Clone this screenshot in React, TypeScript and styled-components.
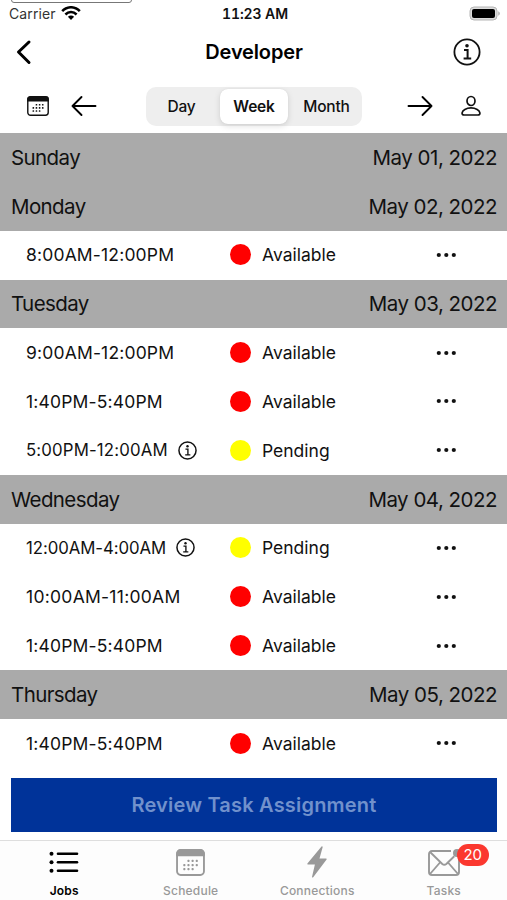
import React from "react";
import styled, { createGlobalStyle, css } from "styled-components";

const GlobalStyle = createGlobalStyle`
  *, *::before, *::after { box-sizing: border-box; }
  body { margin: 0; background: #fff; font-family: Inter, "Liberation Sans", sans-serif; color: #111; }
  button { font: inherit; color: inherit; border: 0; padding: 0; margin: 0; background: none; }
  svg { display: block; flex: none; }
`;

const Screen = styled.div`
  width: 507px;
  height: 900px;
  display: flex;
  flex-direction: column;
  overflow: hidden;
  background: #fff;
`;

const StatusBar = styled.header`
  height: 29px;
  flex: none;
  display: grid;
  grid-template-columns: 1fr auto 1fr;
  position: relative;
  align-items: center;
  padding: 0 6px 2px 9px;
`;

const DeviceEdge = styled.div`
  position: absolute;
  left: 11px;
  top: -8px;
  width: 121px;
  height: 11px;
  border: 1px solid #777;
  border-radius: 3px;
`;

const Carrier = styled.div`
  display: flex;
  align-items: center;
  gap: 5px;
  font-size: 14px;
  letter-spacing: 0.1px;
  color: #333;
`;

const Clock = styled.div`
  font-size: 14px;
  font-weight: 600;
  font-variant-numeric: tabular-nums;
  letter-spacing: -0.1px;
`;

const BatterySlot = styled.div`
  justify-self: end;
`;

const TitleBar = styled.div`
  height: 46px;
  flex: none;
  display: grid;
  grid-template-columns: 60px 1fr 60px;
  align-items: center;
  padding: 0 26px 0 14px;
`;

const Title = styled.h1`
  margin: 0;
  text-align: center;
  font-size: 20px;
  font-weight: 600;
  letter-spacing: -0.15px;
  padding-left: 13px;
  color: #000;
`;

const IconButton = styled.button<{ $end?: boolean }>`
  display: flex;
  align-items: center;
  justify-self: ${(p) => (p.$end ? "end" : "start")};
`;

const Toolbar = styled.div`
  height: 58px;
  flex: none;
  display: flex;
  align-items: center;
  padding: 4px 27px 0;
`;

const ToolGroup = styled.div<{ $gap: number }>`
  display: flex;
  align-items: center;
  gap: ${(p) => p.$gap}px;
`;

const Segmented = styled.div`
  display: flex;
  width: 216px;
  height: 39px;
  margin: 0 45px 0 49px;
  padding: 2px;
  border-radius: 10px;
  background: #eee;
`;

const Segment = styled.button<{ $selected?: boolean; $width: number; $inset?: string }>`
  width: ${(p) => p.$width}px;
  height: 35px;
  padding: ${(p) => p.$inset ?? "0"};
  border-radius: 8px;
  font-size: 15.5px;
  font-weight: 500;
  letter-spacing: -0.2px;
  ${(p) =>
    p.$selected &&
    css`
      background: #fff;
      font-weight: 600;
      letter-spacing: -0.2px;
      box-shadow: 0 2px 6px rgba(0, 0, 0, 0.13), 0 0 1px rgba(0, 0, 0, 0.1);
    `}
`;

const Agenda = styled.main`
  display: grid;
  flex: none;
  grid-auto-rows: 48.85px;
`;

const DayHeader = styled.div`
  display: flex;
  justify-content: space-between;
  align-items: center;
  padding: 0 10px 0.4px 11px;
  background: #aaa;
  font-size: 20.5px;
`;

const DayName = styled.span`
  letter-spacing: -0.6px;
`;

const DayDate = styled.span`
  letter-spacing: -0.5px;
`;

const SlotRow = styled.div`
  display: grid;
  grid-template-columns: 204px 32px 174px 1fr;
  align-items: center;
  padding: 0 0 0.4px 26px;
  font-size: 17.5px;
`;

const SlotTime = styled.div<{ $noted?: boolean; $tracking: number }>`
  display: flex;
  align-items: center;
  gap: 10px;
  font-size: ${(p) => (p.$noted ? 16.8 : 17.5)}px;
  letter-spacing: ${(p) => p.$tracking}px;
`;

const Dot = styled.span<{ $color: string }>`
  width: 21px;
  height: 21px;
  border-radius: 50%;
  background: ${(p) => p.$color};
`;

const SlotStatus = styled.span`
  letter-spacing: 0;
`;

const ReviewButton = styled.button`
  flex: none;
  height: 54px;
  margin: 10px 10px 0 11px;
  background: #003399;
  color: #7191cc;
  font-size: 20px;
  font-weight: 600;
  letter-spacing: 0.2px;
`;

const TabBar = styled.nav`
  flex: 1;
  margin-top: 8px;
  border-top: 1px solid #dedede;
  background: #fdfdfd;
  display: grid;
  grid-template-columns: repeat(4, 126.5px);
  padding-left: 1px;
`;

const Tab = styled.button<{ $active?: boolean }>`
  display: flex;
  flex-direction: column;
  align-items: center;
  color: ${(p) => (p.$active ? "#000" : "#999")};
`;

const TabIcon = styled.span`
  position: relative;
  height: 43px;
  display: flex;
  align-items: center;
`;

const TabLabel = styled.span<{ $active?: boolean }>`
  font-size: 12px;
  line-height: 14px;
  font-weight: ${(p) => (p.$active ? 600 : 500)};
  letter-spacing: 0.2px;
`;

const Badge = styled.span`
  position: absolute;
  left: 29px;
  top: 3px;
  width: 32px;
  height: 22px;
  border-radius: 11px;
  background: #fb382f;
  color: #fff;
  font-size: 15px;
  line-height: 22px;
  text-align: center;
`;

const WifiIcon = () => (
  <svg width="20" height="15" viewBox="0 0 20 15" fill="none" stroke="#000" strokeWidth="2.5">
    <path d="M1.2 5.2C6-.1 14-.1 18.8 5.2M4.4 8.5c3.2-3.2 8-3.2 11.2 0" />
    <path d="M6.9 10.7c1.7-1.7 4.5-1.7 6.2 0L10 14z" fill="#000" stroke="none" />
  </svg>
);

const BatteryIcon = () => (
  <svg width="32" height="16" viewBox="0 0 32 16">
    <rect x="1" y="1" width="27" height="13" rx="4" fill="#ddd" stroke="#b5b5b5" />
    <rect x="3" y="3" width="23" height="9" rx="2" />
    <path d="M29.3 5.3c2 .8 2 3.6 0 4.4z" fill="#aaa" />
  </svg>
);

const ChevronIcon = () => (
  <svg width="20" height="26" viewBox="0 0 20 26" fill="none" stroke="#000" strokeWidth="3" strokeLinecap="round" strokeLinejoin="round">
    <path d="M15 3L4.5 13 15 23.5" />
  </svg>
);

const InfoIcon = ({ size }: { size: number }) => (
  <svg width={size} height={size} viewBox="0 0 28 28" fill="none" stroke="#111" strokeWidth={size > 20 ? 1.8 : 2.2}>
    <circle cx="14" cy="14" r="12.6" />
    <path d="M11 12h3.6v8.3M10.6 20.5h7.6" strokeWidth="2" />
    <circle cx="14" cy="7.7" r="1.8" fill="#111" stroke="none" />
  </svg>
);

const gridDots = [
  [12, 11], [16, 11], [20, 11],
  [8, 15], [12, 15], [16, 15], [20, 15],
  [8, 19], [12, 19], [16, 19],
];

const CalendarIcon = ({ width, height }: { width: number; height: number }) => (
  <svg width={width} height={height} viewBox="0 0 28 26" preserveAspectRatio="none">
    <rect x="1" y="1" width="26" height="24" rx="3.5" fill="none" stroke="currentColor" strokeWidth="1.8" />
    <path d="M.2 7V4.5A4.2 4.2 0 014.4.2h19.2a4.2 4.2 0 014.2 4.3V7z" fill="currentColor" />
    {gridDots.map(([x, y]) => (
      <rect key={`${x}-${y}`} x={x - 1} y={y - 0.6} width="2.1" height="2.1" rx=".7" fill="currentColor" />
    ))}
  </svg>
);

const ArrowIcon = ({ right }: { right?: boolean }) => (
  <svg width="26" height="22" viewBox="0 0 26 22" fill="none" stroke="#000" strokeWidth="1.9" strokeLinecap="round" strokeLinejoin="round">
    <path d={right ? "M1.5 11h23M15.5 2l9 9-9 9" : "M24.5 11h-23M10.5 2l-9 9 9 9"} />
  </svg>
);

const PersonIcon = () => (
  <svg width="20" height="22" viewBox="0 0 20 22" fill="none" stroke="#111" strokeWidth="1.7">
    <ellipse cx="10" cy="6" rx="4" ry="4.5" />
    <path d="M3.2 20c-1.7 0-2.3-.9-2.1-2.1.4-2.6 4-5 8.9-5s8.5 2.4 8.9 5c.2 1.2-.4 2.1-2.1 2.1z" />
  </svg>
);

const MoreIcon = () => (
  <svg width="20" height="6" viewBox="0 0 20 6" fill="#111">
    <circle cx="2.8" cy="3" r="2.1" />
    <circle cx="10.3" cy="3" r="2.1" />
    <circle cx="17.8" cy="3" r="2.1" />
  </svg>
);

const ListIcon = () => (
  <svg width="30" height="22" viewBox="0 0 30 22">
    {[2, 10.5, 19].map((y) => (
      <g key={y}>
        <circle cx="2.5" cy={y + 0.8} r="2" />
        <path d={`M9 ${y + 0.8}h19`} stroke="#000" strokeWidth="2.6" strokeLinecap="round" />
      </g>
    ))}
  </svg>
);

const BoltIcon = () => (
  <svg width="20" height="32" viewBox="0 0 20 32" fill="#999">
    <path d="M14.5.5L.4 17.5q-.4 1 .5 1h7L5 31q.3 1 1.2.2L19.6 13.6q.4-1-.6-1h-6.5L15.7 1q-.3-1-1.2-.5z" />
  </svg>
);

const MailIcon = () => (
  <svg width="32" height="27" viewBox="0 0 32 27" fill="none" stroke="#999" strokeWidth="1.9">
    <path d="M23 2H4a3 3 0 00-3 3v18a3 3 0 003 3h24a3 3 0 003-3V9" />
    <path d="M2.3 3.3l12 11.7q2 1.7 4 0l8-7.7M2 25l10-11.5M30 25L20 13.5" />
    <circle cx="29" cy="4" r="4" fill="#999" stroke="none" />
  </svg>
);

type Slot = { time: string; status: "Available" | "Pending"; noted?: boolean; tracking?: number };
type Day = { name: string; date: string; slots: Slot[] };

const week: Day[] = [
  { name: "Sunday", date: "May 01, 2022", slots: [] },
  { name: "Monday", date: "May 02, 2022", slots: [{ time: "8:00AM-12:00PM", status: "Available" }] },
  {
    name: "Tuesday",
    date: "May 03, 2022",
    slots: [
      { time: "9:00AM-12:00PM", status: "Available" },
      { time: "1:40PM-5:40PM", status: "Available" },
      { time: "5:00PM-12:00AM", status: "Pending", noted: true, tracking: 0.15 },
    ],
  },
  {
    name: "Wednesday",
    date: "May 04, 2022",
    slots: [
      { time: "12:00AM-4:00AM", status: "Pending", noted: true, tracking: -0.08 },
      { time: "10:00AM-11:00AM", status: "Available", tracking: 0.27 },
      { time: "1:40PM-5:40PM", status: "Available" },
    ],
  },
  { name: "Thursday", date: "May 05, 2022", slots: [{ time: "1:40PM-5:40PM", status: "Available" }] },
];

export default function App() {
  return (
    <>
      <GlobalStyle />
      <Screen>
        <StatusBar>
          <DeviceEdge />
          <Carrier>
            Carrier
            <WifiIcon />
          </Carrier>
          <Clock>11:23 AM</Clock>
          <BatterySlot>
            <BatteryIcon />
          </BatterySlot>
        </StatusBar>
        <TitleBar>
          <IconButton aria-label="Back">
            <ChevronIcon />
          </IconButton>
          <Title>Developer</Title>
          <IconButton $end aria-label="Information">
            <InfoIcon size={28} />
          </IconButton>
        </TitleBar>
        <Toolbar>
          <ToolGroup $gap={22}>
            <CalendarIcon width={22} height={20} />
            <ArrowIcon />
          </ToolGroup>
          <Segmented>
            <Segment $width={72} $inset="0 5px 0 0">
              Day
            </Segment>
            <Segment $width={68} $selected>
              Week
            </Segment>
            <Segment $width={72} $inset="0 0 0 5px">
              Month
            </Segment>
          </Segmented>
          <ToolGroup $gap={28}>
            <ArrowIcon right />
            <PersonIcon />
          </ToolGroup>
        </Toolbar>
        <Agenda>
          {week.map((day) => (
            <React.Fragment key={day.name}>
              <DayHeader>
                <DayName>{day.name}</DayName>
                <DayDate>{day.date}</DayDate>
              </DayHeader>
              {day.slots.map((slot) => (
                <SlotRow key={slot.time}>
                  <SlotTime $noted={slot.noted} $tracking={slot.tracking ?? 0.17}>
                    {slot.time}
                    {slot.noted && <InfoIcon size={19} />}
                  </SlotTime>
                  <Dot $color={slot.status === "Available" ? "#f00" : "#ff0"} />
                  <SlotStatus>{slot.status}</SlotStatus>
                  <MoreIcon />
                </SlotRow>
              ))}
            </React.Fragment>
          ))}
        </Agenda>
        <ReviewButton>Review Task Assignment</ReviewButton>
        <TabBar>
          <Tab $active>
            <TabIcon>
              <ListIcon />
            </TabIcon>
            <TabLabel $active>Jobs</TabLabel>
          </Tab>
          <Tab>
            <TabIcon>
              <CalendarIcon width={29} height={27} />
            </TabIcon>
            <TabLabel>Schedule</TabLabel>
          </Tab>
          <Tab>
            <TabIcon>
              <BoltIcon />
            </TabIcon>
            <TabLabel>Connections</TabLabel>
          </Tab>
          <Tab>
            <TabIcon>
              <MailIcon />
              <Badge>20</Badge>
            </TabIcon>
            <TabLabel>Tasks</TabLabel>
          </Tab>
        </TabBar>
      </Screen>
    </>
  );
}
